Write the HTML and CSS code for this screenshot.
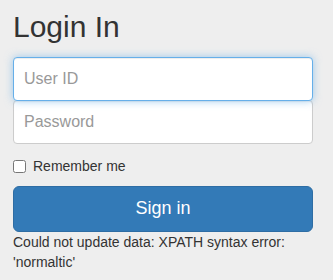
FILE: index.html
```html
<!DOCTYPE html>
<html lang="en">
<head>
    <meta charset="UTF-8">
    <meta name="viewport" content="width=device-width, initial-scale=1.0">
    <title>Login In</title>
    <link rel="stylesheet" href="styles.css">
</head>
<body>
    <form class="form-signin" onsubmit="return false;">
        <h2 class="form-signin-heading">Login In</h2>
        <input type="text" id="userid" class="form-control first" placeholder="User ID" autofocus>
        <input type="password" id="password" class="form-control" placeholder="Password">
        <div class="checkbox">
            <label><input type="checkbox" value="remember-me"> Remember me</label>
        </div>
        <button class="btn btn-primary" type="submit">Sign in</button>
        <p class="message">Could not update data: XPATH syntax error: 'normaltic'</p>
    </form>
</body>
</html>
```

FILE: styles.css
```css
body {
    font-family: "Liberation Sans", Arial, sans-serif;
    font-size: 14px;
    line-height: 1.42857;
    color: #333;
    background-color: #eee;
    margin: 0;
    padding: 0;
}
.form-signin {
    width: 300px;
    padding: 0 13px;
}
.form-signin-heading {
    font-size: 30px;
    font-weight: 500;
    line-height: 1.1;
    margin: 10px 0 14px;
}
.form-control {
    display: block;
    box-sizing: border-box;
    width: 100%;
    height: 44px;
    padding: 10px;
    font-family: inherit;
    font-size: 16px;
    color: #555;
    background-color: #fff;
    border: 1px solid #ccc;
    border-radius: 4px;
    box-shadow: inset 0 1px 1px rgba(0, 0, 0, 0.075);
    margin: 0;
}
.form-control::placeholder {
    color: #999;
}
.form-control:focus {
    position: relative;
    z-index: 2;
    border-color: #66afe9;
    outline: 0;
    box-shadow: inset 0 1px 1px rgba(0, 0, 0, 0.075), 0 0 8px rgba(102, 175, 233, 0.6);
}
.form-control.first {
    margin-bottom: -1px;
}
.checkbox {
    margin: 13px 0 9px;
}
.checkbox label {
    display: flex;
    align-items: center;
    gap: 7px;
}
.checkbox input {
    width: 13px;
    height: 13px;
    margin: 0;
}
.btn {
    display: block;
    box-sizing: border-box;
    width: 100%;
    height: 46px;
    padding: 10px 16px;
    font-family: inherit;
    font-size: 18px;
    line-height: 1.3333;
    color: #fff;
    background-color: #337ab7;
    border: 1px solid #2e6da4;
    border-radius: 6px;
}
.message {
    margin: 1px 0 0;
}
```
